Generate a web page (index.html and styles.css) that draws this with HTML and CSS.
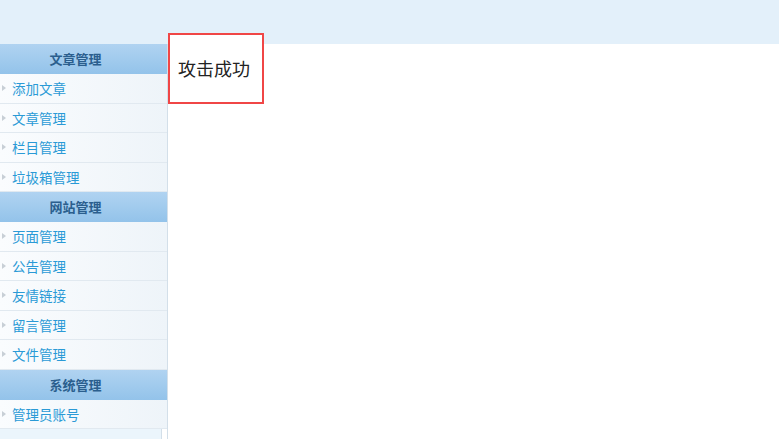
FILE: index.html
```html
<!DOCTYPE html>
<html lang="zh-CN">
<head>
    <meta charset="UTF-8">
    <title>后台管理</title>
    <link rel="stylesheet" href="styles.css">
</head>
<body>

    <div class="top"></div>

    <div class="wrap">
        <div class="side">
            <div class="side__title">文章管理</div>
            <a class="side__item">添加文章</a>
            <a class="side__item">文章管理</a>
            <a class="side__item">栏目管理</a>
            <a class="side__item">垃圾箱管理</a>

            <div class="side__title">网站管理</div>
            <a class="side__item">页面管理</a>
            <a class="side__item">公告管理</a>
            <a class="side__item">友情链接</a>
            <a class="side__item">留言管理</a>
            <a class="side__item">文件管理</a>

            <div class="side__title">系统管理</div>
            <a class="side__item">管理员账号</a>
            <div class="side__more"></div>
        </div>

        <div class="main">
            <div class="alert">攻击成功</div>
        </div>
    </div>

</body>
</html>
```

FILE: styles.css
```css
body {
    margin: 0;
    background: #fff;
    font-family: "Microsoft YaHei", "Noto Sans CJK SC", sans-serif;
    font-size: 13px;
    overflow: hidden;
}

.top {
    height: 44px;
    background: #e3f0fa;
}

.wrap {
    display: flex;
    align-items: flex-start;
}

.side {
    width: 167px;
    border-right: 1px solid #d3dfe9;
    display: flex;
    flex-direction: column;
    flex-shrink: 0;
}

.side__title {
    height: 30px;
    line-height: 30px;
    padding-right: 16px;
    text-align: center;
    font-weight: bold;
    color: #2b5f8e;
    background: linear-gradient(#b0d3f1, #93c3ea);
}

.side__item {
    box-sizing: border-box;
    height: 29.5px;
    line-height: 28px;
    padding-left: 12px;
    font-size: 13.5px;
    color: #2a9ad6;
    background: linear-gradient(to right, #fafcfe, #eef4f9);
    border-bottom: 1px solid #e1e9f0;
    position: relative;
    cursor: pointer;
}

.side__item::before {
    content: "";
    position: absolute;
    left: 2px;
    top: 11px;
    border-left: 4px solid #c8cfd6;
    border-top: 3.5px solid transparent;
    border-bottom: 3.5px solid transparent;
}

.side__more {
    height: 12px;
    width: 161px;
    background: #ebf5fc;
    border-right: 1px solid #d3dfe9;
}

.main {
    flex: 1;
}

.alert {
    display: inline-block;
    box-sizing: border-box;
    width: 96px;
    height: 71px;
    margin-top: -11px;
    padding: 20px 0 0 8px;
    border: 2px solid #f04646;
    background: #fff;
    font-size: 18px;
    line-height: 26px;
    color: #222;
}
```
